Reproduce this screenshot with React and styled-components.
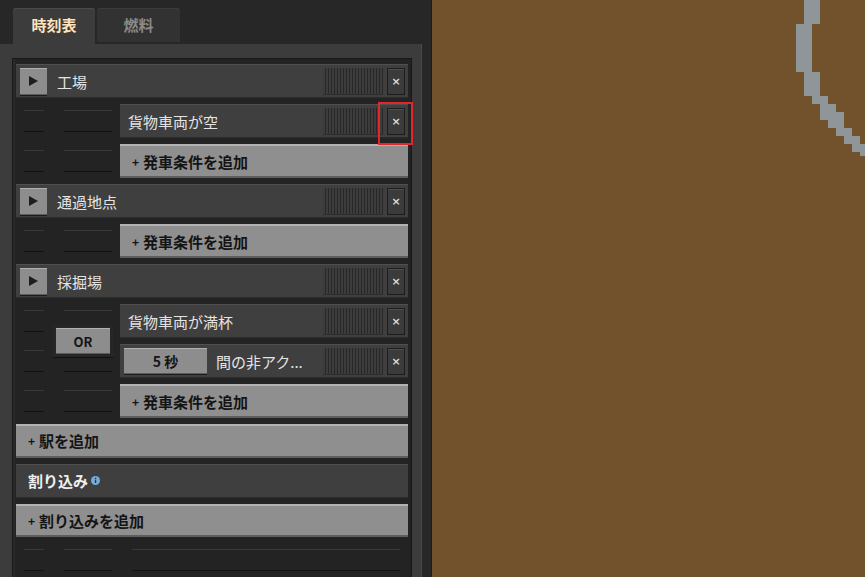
import React from 'react'
import styled, { createGlobalStyle } from 'styled-components'

const GlobalStyle = createGlobalStyle`
  * { box-sizing: border-box; }
  body {
    margin: 0;
    background: #72522d;
    font-family: "Noto Sans CJK JP", "Noto Sans", sans-serif;
  }
`

const railBlocks = [
  [804, 0, 16, 24],
  [796, 24, 16, 48],
  [804, 72, 16, 24],
  [812, 96, 16, 8],
  [820, 104, 16, 8],
  [820, 112, 24, 8],
  [828, 120, 16, 8],
  [836, 128, 16, 8],
  [844, 136, 16, 8],
  [852, 144, 13, 8],
  [860, 152, 5, 4],
]

function PlayIcon() {
  return (
    <svg width="11" height="12" viewBox="0 0 11 12">
      <polygon points="1,1 10,6 1,11" fill="#1e1e1e" />
    </svg>
  )
}

function InfoIcon() {
  return (
    <svg width="9" height="9" viewBox="0 0 9 9">
      <circle cx="4.5" cy="4.5" r="4.5" fill="#74acd9" />
      <rect x="3.9" y="3.6" width="1.3" height="3.4" fill="#1d3550" />
      <rect x="3.9" y="1.7" width="1.3" height="1.2" fill="#1d3550" />
    </svg>
  )
}

function Station({ name }) {
  return (
    <StationRow>
      <PlayButton><PlayIcon /></PlayButton>
      <Name>{name}</Name>
      <Grip />
      <CloseButton>×</CloseButton>
    </StationRow>
  )
}

function Line({ children }) {
  return (
    <ConditionLine>
      <Slot $width={20} $gap={8} />
      <Slot $width={48} $gap={20} />
      <LineBody>{children}</LineBody>
    </ConditionLine>
  )
}

function AddCondition() {
  return (
    <Line>
      <AddButton $indent={12}><Plus>+</Plus>発車条件を追加</AddButton>
    </Line>
  )
}

export default function App() {
  return (
    <Screen>
      <GlobalStyle />
      <Window>
        <TabBar>
          <Tab $active>時刻表</Tab>
          <Tab>燃料</Tab>
        </TabBar>
        <Frame>
          <Pane>
            <Station name="工場" />
            <Conditions>
              <Line>
                <ConditionRow>
                  <Label>貨物車両が空</Label>
                  <Grip />
                  <CloseButton>×</CloseButton>
                  <Highlight />
                </ConditionRow>
              </Line>
              <AddCondition />
            </Conditions>

            <Station name="通過地点" />
            <Conditions>
              <AddCondition />
            </Conditions>

            <Station name="採掘場" />
            <Conditions>
              <Line>
                <ConditionRow>
                  <Label>貨物車両が満杯</Label>
                  <Grip />
                  <CloseButton>×</CloseButton>
                </ConditionRow>
              </Line>
              <Line>
                <ConditionRow $pad={4}>
                  <ValueButton>5 秒</ValueButton>
                  <Label $gap={9}>間の非アク...</Label>
                  <Grip />
                  <CloseButton>×</CloseButton>
                </ConditionRow>
              </Line>
              <AddCondition />
              <OrFrame><OrButton>OR</OrButton></OrFrame>
            </Conditions>

            <AddButton $indent={12}><Plus>+</Plus>駅を追加</AddButton>
            <Header>割り込み<InfoIcon /></Header>
            <AddButton $indent={12}><Plus>+</Plus>割り込みを追加</AddButton>

            <ConditionLine>
              <Slot $width={20} $gap={8} />
              <Slot $width={48} $gap={20} />
              <Slot $width={268} $gap={20} />
            </ConditionLine>
          </Pane>
        </Frame>
      </Window>
      <Map>
        <RailLayer width="433" height="577" viewBox="432 0 433 577">
          {railBlocks.map(([x, y, w, h], i) => (
            <rect key={i} x={x} y={y} width={w} height={h} fill="#8f9699" />
          ))}
        </RailLayer>
      </Map>
    </Screen>
  )
}

const Screen = styled.div`
  display: flex;
  width: 865px;
  height: 577px;
  overflow: hidden;
`

const Window = styled.div`
  width: 432px;
  display: flex;
  flex-direction: column;
  background: #272727;
  border-right: 1px solid #1c1c1c;
`

const TabBar = styled.div`
  height: 44px;
  display: flex;
  align-items: flex-end;
  gap: 2px;
  padding-left: 13px;
`

const Tab = styled.div`
  width: ${p => (p.$active ? 82 : 83)}px;
  height: ${p => (p.$active ? 36 : 34)}px;
  margin-bottom: ${p => (p.$active ? 0 : 2)}px;
  display: flex;
  align-items: center;
  justify-content: center;
  padding-bottom: ${p => (p.$active ? 3 : 1)}px;
  border-radius: 3px 3px 0 0;
  background: ${p => (p.$active ? '#3c3c3c' : '#323232')};
  box-shadow: inset 0 1px 0 ${p => (p.$active ? '#4a4a4a' : '#3c3c3c')};
  color: ${p => (p.$active ? '#ffe4bd' : '#8a8a8a')};
  font-size: 15px;
  font-weight: 700;
`

const Frame = styled.div`
  flex: 1;
  width: 422px;
  min-height: 0;
  background: #3c3c3c;
  padding: 14px 10px 0 12px;
  box-shadow: inset -1px 0 0 #4a4a4a;
`

const Pane = styled.div`
  height: 100%;
  background: #232323;
  border: 1px solid #181818;
  border-bottom: none;
  box-shadow: inset 2px 0 0 #2a2a2a;
  padding: 5px 3px 0 3px;
  display: flex;
  flex-direction: column;
  gap: 6px;
`

const StationRow = styled.div`
  height: 34px;
  flex: none;
  display: flex;
  align-items: center;
  padding: 0 3px 0 4px;
  background: #3f3f3f;
  box-shadow: inset 0 1px 0 #4f4f4f, inset 0 -1px 0 #2c2c2c;
`

const PlayButton = styled.div`
  width: 27px;
  height: 27px;
  display: flex;
  align-items: center;
  justify-content: center;
  background: #8d8d8d;
  box-shadow: inset 0 1px 0 #b0b0b0, inset 0 -1px 0 #5c5c5c, 0 1px 0 #1c1c1c;
`

const Name = styled.span`
  margin-left: 10px;
  color: #e4e4e4;
  font-size: 15px;
`

const Grip = styled.div`
  width: 60px;
  height: 27px;
  margin-left: auto;
  margin-right: 4px;
  background: repeating-linear-gradient(to right, #3c3c3c 0 2px, #282828 2px 3px);
  box-shadow: inset 0 -1px 0 #2e2e2e;
`

const CloseButton = styled.div`
  width: 18px;
  height: 27px;
  display: flex;
  align-items: center;
  justify-content: center;
  background: #3b3b3b;
  border: 1px solid #1d1d1d;
  box-shadow: inset 0 1px 0 #505050;
  color: #dcdcdc;
  font-family: "DejaVu Sans", sans-serif;
  font-size: 11px;
  font-weight: 700;
`

const Conditions = styled.div`
  position: relative;
  display: flex;
  flex-direction: column;
  gap: 6px;
`

const ConditionLine = styled.div`
  height: 34px;
  flex: none;
  display: flex;
  align-items: center;
`

const Slot = styled.div`
  width: ${p => p.$width}px;
  height: 22px;
  margin-left: ${p => p.$gap}px;
  border-top: 1px solid #393939;
  border-bottom: 1px solid #121212;
`

const LineBody = styled.div`
  flex: 1;
  height: 34px;
  margin-left: 8px;
  display: flex;
`

const ConditionRow = styled.div`
  position: relative;
  flex: 1;
  display: flex;
  align-items: center;
  padding: 0 3px 0 ${p => p.$pad || 8}px;
  background: #3f3f3f;
  box-shadow: inset 0 1px 0 #4f4f4f, inset 0 -1px 0 #2c2c2c;
`

const Label = styled.span`
  margin-left: ${p => p.$gap || 0}px;
  color: #e4e4e4;
  font-size: 15px;
  white-space: nowrap;
`

const ValueButton = styled.div`
  width: 83px;
  height: 26px;
  display: flex;
  align-items: center;
  justify-content: center;
  background: #8d8d8d;
  box-shadow: inset 0 1px 0 #b0b0b0, inset 0 -1px 0 #5c5c5c, 0 1px 0 #1c1c1c;
  color: #141414;
  font-size: 14px;
  font-weight: 700;
`

const AddButton = styled.div`
  flex: 1;
  height: 34px;
  display: flex;
  align-items: center;
  padding-left: ${p => p.$indent}px;
  background: #8f8f8f;
  box-shadow: inset 0 2px 0 #b2b2b2, inset 0 -2px 0 #5e5e5e;
  color: #141414;
  font-size: 15px;
  font-weight: 700;
`

const Plus = styled.span`
  font-size: 12px;
  margin-right: 4px;
`

const Header = styled.div`
  height: 34px;
  flex: none;
  display: flex;
  align-items: center;
  gap: 3px;
  padding-left: 12px;
  background: #3f3f3f;
  box-shadow: inset 0 1px 0 #4f4f4f, inset 0 -1px 0 #2c2c2c;
  color: #f0f0f0;
  font-size: 15px;
  font-weight: 700;
`

const OrFrame = styled.div`
  position: absolute;
  left: 37px;
  top: 21px;
  width: 60px;
  height: 32px;
  padding: 3px;
  background: #262626;
  box-shadow: 0 1px 0 #111;
`

const OrButton = styled.div`
  height: 100%;
  display: flex;
  align-items: center;
  justify-content: center;
  background: #8d8d8d;
  box-shadow: inset 0 1px 0 #b0b0b0, inset 0 -1px 0 #5c5c5c;
  color: #141414;
  font-size: 13px;
  font-weight: 700;
`

const Highlight = styled.div`
  position: absolute;
  right: -5px;
  top: -2px;
  width: 35px;
  height: 43px;
  border: 2px solid #e1262c;
  pointer-events: none;
`

const Map = styled.div`
  position: relative;
  flex: 1;
  background: #72522d;
`

const RailLayer = styled.svg`
  position: absolute;
  left: 0;
  top: 0;
  shape-rendering: crispEdges;
`
